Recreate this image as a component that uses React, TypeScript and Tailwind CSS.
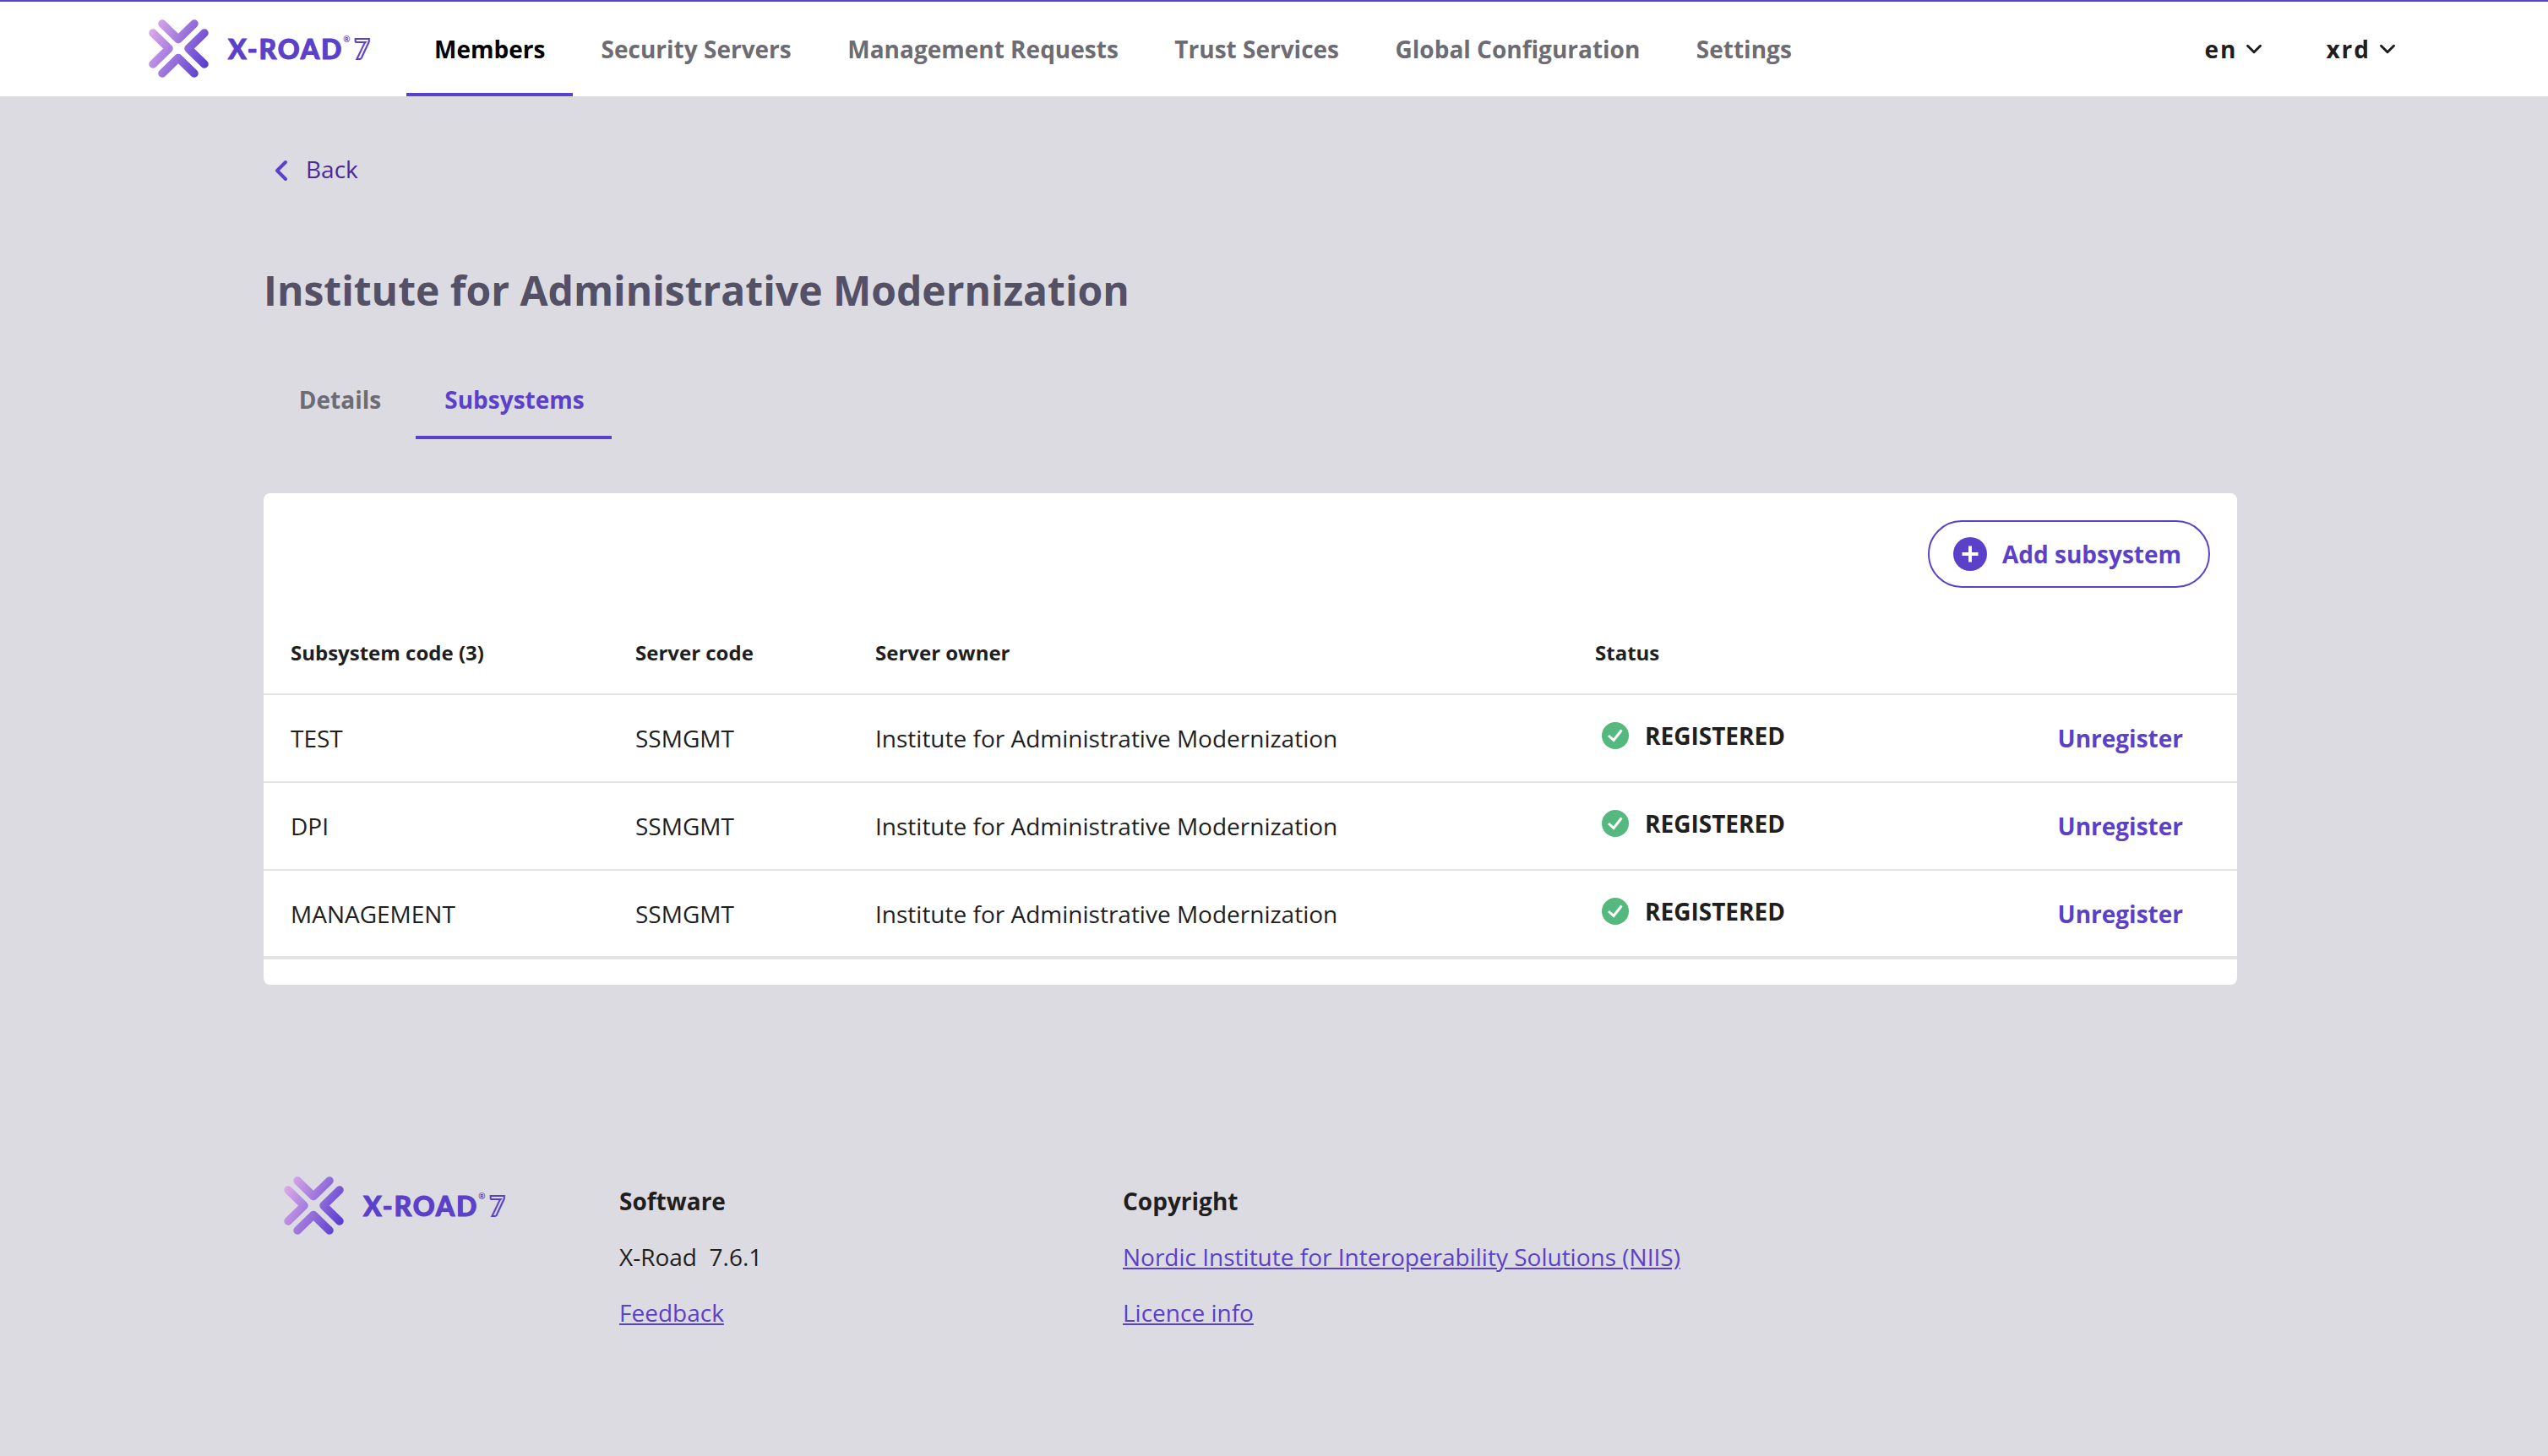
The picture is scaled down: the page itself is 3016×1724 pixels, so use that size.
import React from 'react';
import { ChevronDown, ChevronLeft } from 'lucide-react';

const navItems = ['Members', 'Security Servers', 'Management Requests', 'Trust Services', 'Global Configuration', 'Settings'];

const subsystems = ['TEST', 'DPI', 'MANAGEMENT'];

function Logo({ id }: { id: string }) {
  return (
    <div className="flex items-center">
      <svg width="72" height="70" viewBox="0 0 72 70" fill="none">
        <defs>
          <linearGradient id={id} gradientUnits="userSpaceOnUse" x1="0" y1="15" x2="70" y2="50">
            <stop offset="0" stopColor="#dcaae8" />
            <stop offset="1" stopColor="#5a3fd0" />
          </linearGradient>
        </defs>
        <g stroke={`url(#${id})`} strokeWidth="9.5" strokeLinecap="round" strokeLinejoin="round">
          <path d="M16 5 L35 23.5 L54 5" />
          <path d="M66 16 L47 34.5 L66 53" />
          <path d="M16 64 L35 45.5 L54 64" />
          <path d="M5 16 L24 34.5 L5 53" />
        </g>
      </svg>
      <div className="ml-[22px] flex items-start font-['Lato',sans-serif] text-[32px] leading-[38px] font-black tracking-[1.8px] text-[#5b40c9]">
        <span className="[-webkit-text-stroke:1px_#5b40c9]">X-ROAD</span>
        <span className="mt-[2px] text-[10px] leading-[10px] font-bold">®</span>
        <span className="ml-[3px] text-transparent [-webkit-text-stroke:2px_#5b40c9]">7</span>
      </div>
    </div>
  );
}

function Picker({ label }: { label: string }) {
  return (
    <div className="flex items-center gap-[5px] text-[28px] font-bold tracking-[2px] text-[#211e1e]">
      <span>{label}</span>
      <ChevronDown size={30} strokeWidth={2.4} />
    </div>
  );
}

export default function App() {
  return (
    <div className="min-h-[1724px] bg-[#dcdbe1] font-['Open_Sans',sans-serif] text-[#211e1e]">
      <header className="flex h-[114px] items-stretch border-t-2 border-[#5b40c9] bg-white pl-[176px]">
        <div className="flex w-[305px] items-center">
          <Logo id="logo-top" />
        </div>
        <nav className="flex">
          {navItems.map((item, i) => (
            <div
              key={item}
              className={
                i === 0
                  ? 'flex items-center border-b-4 border-[#5b40c9] px-[33px] pt-[4px] text-[28px] font-bold text-black'
                  : 'flex items-center px-[33.25px] text-[28px] font-bold text-[#6d6c73]'
              }
            >
              {item}
            </div>
          ))}
        </nav>
        <div className="ml-auto flex items-center gap-[70px] pr-[175px]">
          <Picker label="en" />
          <Picker label="xrd" />
        </div>
      </header>

      <main className="ml-[312px] w-[2336px]">
        <div className="mt-[66px] flex h-[40px] items-center pl-[1px] text-[28px] text-[#4a2a99]">
          <ChevronLeft size={40} strokeWidth={2.4} className="mt-[4px] text-[#5b40c9]" />
          <span className="ml-[9px]">Back</span>
        </div>

        <h1 className="mt-[92px] text-[48px] leading-[64px] font-bold text-[#545066]">
          Institute for Administrative Modernization
        </h1>

        <div className="mt-[62px] flex text-[28px] font-bold">
          <div className="flex h-[82px] w-[180px] items-center justify-center pb-[13px] pl-[1px] text-[#6d6c73]">Details</div>
          <div className="flex h-[82px] w-[232px] items-center justify-center border-b-4 border-[#5b40c9] pb-[9px] pl-[2px] text-[#5b40c9]">
            Subsystems
          </div>
        </div>

        <section className="mt-[64px] rounded-[8px] bg-white pb-[30px]">
          <div className="flex justify-end pt-[32px] pr-[32px]">
            <button className="flex h-[80px] w-[334px] items-center rounded-full border-2 border-[#5b40c9] pl-[28px] text-[28px] font-bold text-[#5b40c9]">
              <svg width="40" height="40" viewBox="0 0 40 40">
                <circle cx="20" cy="20" r="20" fill="#5b40c9" />
                <path d="M20 10.5 V29.5 M10.5 20 H29.5" stroke="white" strokeWidth="4" />
              </svg>
              <span className="ml-[18px]">Add subsystem</span>
            </button>
          </div>
          <table className="w-full border-collapse text-left">
            <thead>
              <tr className="h-[126px] border-b-2 border-[#e3e3e3] text-[24px] font-bold">
                <th className="w-[440px] pt-[28px] pl-[32px]">Subsystem code (3)</th>
                <th className="w-[284px] pt-[28px]">Server code</th>
                <th className="w-[852px] pt-[28px]">Server owner</th>
                <th className="pt-[28px]">Status</th>
                <th />
              </tr>
            </thead>
            <tbody className="text-[28px]">
              {subsystems.map((code) => (
                <tr key={code} className="h-[104px] border-b-2 border-[#e3e3e3] last:border-b-4">
                  <td className="pl-[32px]">{code}</td>
                  <td>SSMGMT</td>
                  <td>Institute for Administrative Modernization</td>
                  <td>
                    <div className="flex items-center pb-[6px] pl-[8px] font-bold">
                      <svg width="32" height="32" viewBox="0 0 32 32">
                        <circle cx="16" cy="16" r="16" fill="#54b87f" />
                        <path d="M8 16 L14 21.5 L23.5 9.5" fill="none" stroke="white" strokeWidth="3" />
                      </svg>
                      <span className="ml-[19px]">REGISTERED</span>
                    </div>
                  </td>
                  <td className="pr-[64px] text-right font-bold text-[#5b40c9]">Unregister</td>
                </tr>
              ))}
            </tbody>
          </table>
        </section>

        <footer className="mt-[227px] flex text-[28px]">
          <div className="ml-[24px] w-[397px]">
            <Logo id="logo-bottom" />
          </div>
          <div className="w-[596px] pt-[8px]">
            <div className="font-bold">Software</div>
            <div className="mt-[24px]">X-Road&nbsp; 7.6.1</div>
            <a className="mt-[24px] block text-[#5b40c9] underline">Feedback</a>
          </div>
          <div className="pt-[8px]">
            <div className="font-bold">Copyright</div>
            <a className="mt-[24px] block text-[#5b40c9] underline">Nordic Institute for Interoperability Solutions (NIIS)</a>
            <a className="mt-[24px] block text-[#5b40c9] underline">Licence info</a>
          </div>
        </footer>
      </main>
    </div>
  );
}
